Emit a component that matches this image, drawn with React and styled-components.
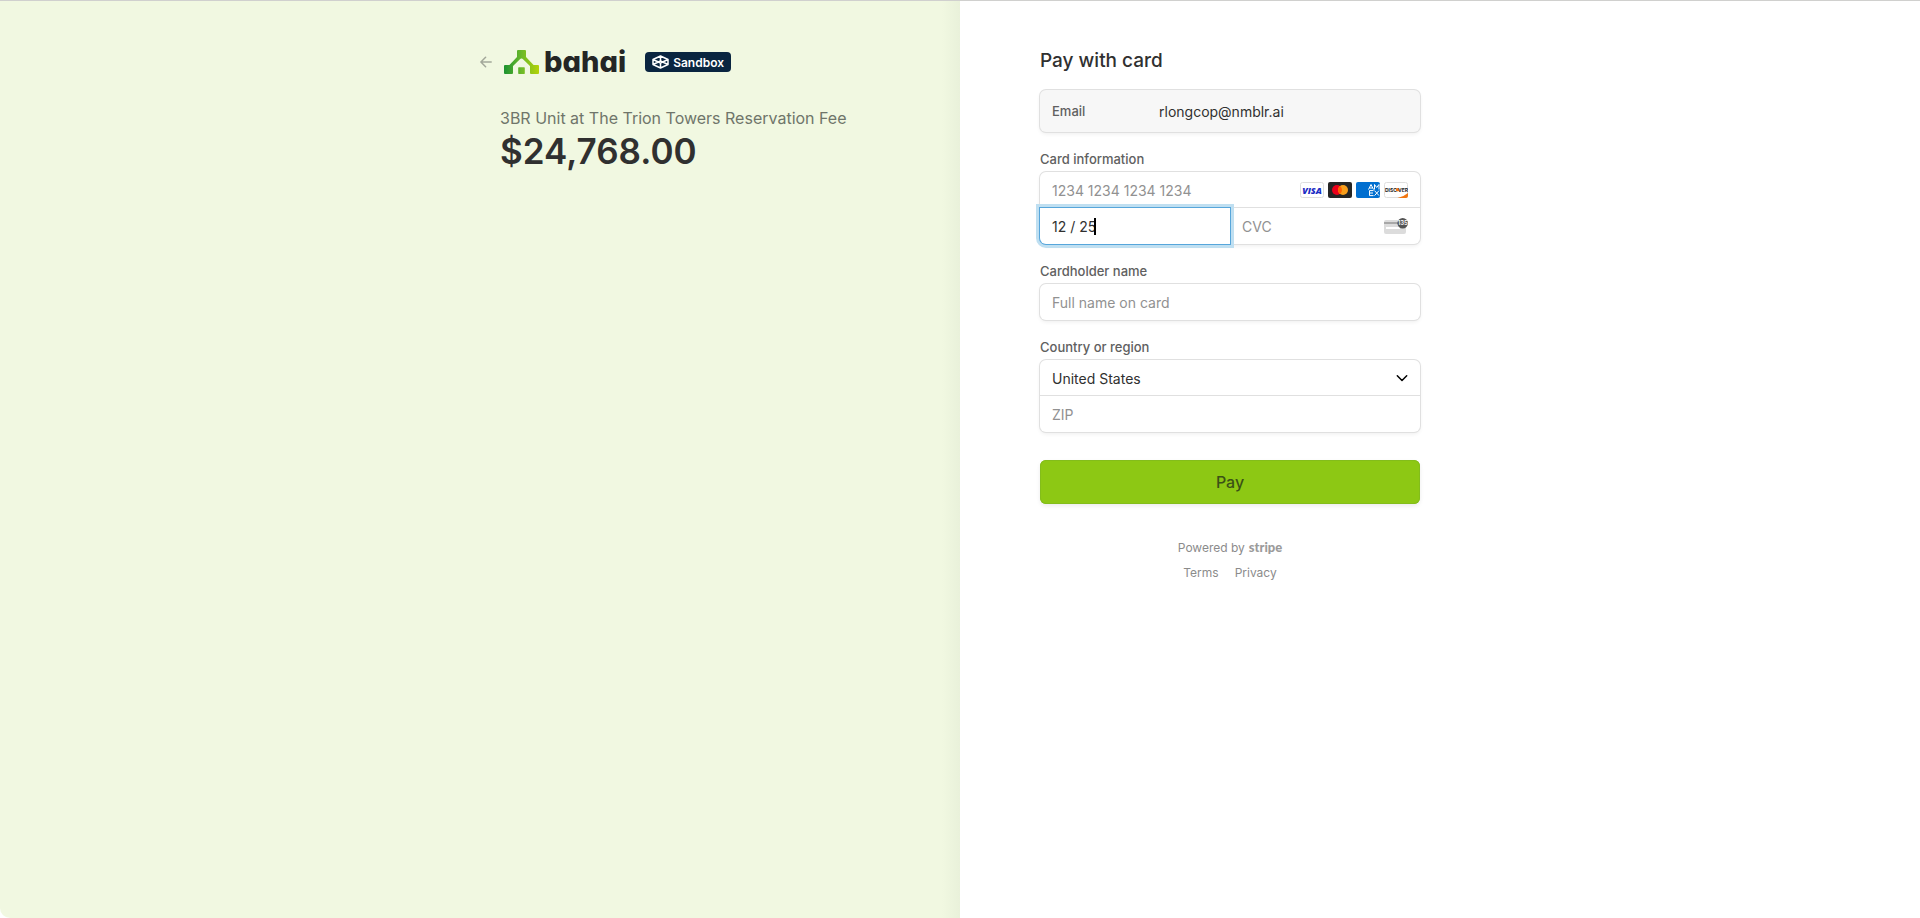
import React from "react";
import styled, { createGlobalStyle } from "styled-components";

const GlobalStyle = createGlobalStyle`
  *, *::before, *::after { box-sizing: border-box; }
  body {
    margin: 0;
    background: #fff;
    color: #303030;
    font-family: Inter, "Liberation Sans", sans-serif;
    font-size: 14px;
    -webkit-font-smoothing: antialiased;
  }
  input, select, button { font: inherit; color: inherit; margin: 0; }
`;

const Page = styled.div`
  display: grid;
  grid-template-columns: 1fr 1fr;
  min-height: 100vh;
  border-top: 1px solid #d0d0ce;
`;

const Summary = styled.section`
  display: flex;
  justify-content: flex-end;
  padding: 48px 80px 48px 20px;
  border-bottom-left-radius: 10px;
  background: linear-gradient(to left, #e9f1da 0, #f1f8e1 18px);
`;

const SummaryColumn = styled.div`
  width: 100%;
  max-width: 380px;
`;

const Payment = styled.main`
  padding: 48px 20px 48px 80px;
`;

const PaymentColumn = styled.form`
  width: 100%;
  max-width: 380px;
`;

const Header = styled.header`
  display: flex;
  align-items: center;
  height: 26px;
  margin-left: -20px;
`;

const BackLink = styled.a`
  display: flex;
  margin-right: 12px;
  color: #a3a89a;
`;

const Brand = styled.div`
  display: flex;
  align-items: center;
  gap: 5px;
`;

const Wordmark = styled.span`
  color: #242625;
  font-size: 29px;
  font-weight: 800;
  line-height: 24px;
  font-feature-settings: "cv11";
`;

const Badge = styled.span`
  display: flex;
  align-items: center;
  gap: 4px;
  height: 20px;
  margin-left: 19px;
  padding: 0 7px;
  border-radius: 4px;
  background: #0a2540;
  color: #fff;
  font-size: 12px;
  font-weight: 600;
`;

const ProductName = styled.h1`
  margin: 30px 0 0;
  color: #6f756a;
  font-size: 16px;
  font-weight: 400;
  line-height: 26px;
`;

const Price = styled.p`
  margin: 0;
  font-size: 35px;
  font-weight: 600;
  line-height: 41px;
`;

const Title = styled.h2`
  margin: 0 0 17px;
  font-size: 19px;
  font-weight: 500;
  line-height: 24px;
`;

const Panel = styled.div`
  border-radius: 6px;
  background: ${(p) => (p.$muted ? "#f7f7f7" : "#fff")};
  box-shadow: 0 0 0 1px #e0e0e0, 0 2px 4px rgba(0, 0, 0, 0.07);
`;

const EmailRow = styled(Panel)`
  display: flex;
  align-items: center;
  height: 42px;
  padding: 0 12px;
`;

const EmailLabel = styled.span`
  width: 107px;
  color: #606060;
  font-size: 13px;
  font-weight: 500;
`;

const Field = styled.fieldset`
  min-width: 0;
  margin: 18px 0 0;
  padding: 0;
  border: 0;
`;

const Label = styled.label`
  display: block;
  margin-bottom: 4px;
  color: #606060;
  font-size: 13px;
  font-weight: 500;
  line-height: 18px;
`;

const Split = styled.div`
  display: grid;
  grid-template-columns: repeat(2, minmax(0, 1fr));
`;

const Cell = styled.div`
  position: relative;
  display: flex;
  align-items: center;
  min-width: 0;
  height: 36px;
  padding-right: 12px;
  box-shadow: ${(p) => (p.$divided ? "inset 0 -1px 0 #e0e0e0" : "none")};
`;

const TextInput = styled.input`
  flex: 1;
  width: 100%;
  min-width: 0;
  height: 100%;
  padding: 0 12px;
  border: 0;
  outline: 0;
  background: transparent;
  &::placeholder { color: #919191; opacity: 1; }
`;

const ActiveCell = styled(Cell)`
  z-index: 1;
  border-radius: 0 0 0 6px;
  background: #fff;
  box-shadow: 0 0 0 1px #57a6db, 0 0 0 4px #bfdff1;
  ${TextInput} { caret-color: transparent; }
`;

const Caret = styled.span`
  position: absolute;
  left: 54px;
  width: 2px;
  height: 17px;
  background: #000;
`;

const CardBrands = styled.div`
  display: flex;
  gap: 4px;
`;

const Icon = styled.svg`
  display: block;
  flex: none;
`;

const CountrySelect = styled.select`
  width: 100%;
  height: 100%;
  padding: 0 12px;
  border: 0;
  outline: 0;
  background: transparent;
  appearance: none;
`;

const PayButton = styled.button`
  display: block;
  width: 100%;
  height: 44px;
  margin-top: 28px;
  border: 0;
  border-radius: 6px;
  background: #8dc814;
  box-shadow: inset 0 0 0 1px #83bd1b, 0 2px 4px rgba(0, 0, 0, 0.08);
  color: #3b5216;
  font-size: 16px;
  font-weight: 500;
`;

const Footer = styled.footer`
  display: flex;
  flex-direction: column;
  align-items: center;
  margin-top: 31px;
  color: #8b8b8b;
  font-size: 12px;
  line-height: 25px;
`;

const FooterLine = styled.div`
  display: flex;
  gap: ${(p) => p.$gap}px;
`;

const FooterLink = styled.a`
  color: inherit;
  text-decoration: none;
`;

const StripeMark = styled.span`
  color: #9b9b9b;
  font-family: Lato, sans-serif;
  font-size: 13px;
  font-weight: 900;
`;

const Chevron = styled.svg`
  position: absolute;
  right: 12px;
  pointer-events: none;
`;

const ArrowIcon = () => (
  <Icon width="12" height="12" viewBox="0 0 12 12" fill="none" stroke="currentColor" strokeWidth="1.500" strokeLinecap="round" strokeLinejoin="round">
    <path d="M11.200 6H1M5.600 1.200.900 6l4.700 4.800" />
  </Icon>
);

const HouseLogo = () => (
  <Icon width="35" height="24" viewBox="0 0 35 24">
    <defs>
      <linearGradient id="leaf" gradientUnits="userSpaceOnUse" x1="0" y1="0" x2="35" y2="0">
        <stop offset="0" stopColor="#1c9230" />
        <stop offset="0.5" stopColor="#6cb92a" />
        <stop offset="1" stopColor="#b4d306" />
      </linearGradient>
    </defs>
    <g fill="url(#leaf)">
      <rect x="0" y="15" width="9" height="9" rx="1" />
      <rect x="13" y="0" width="9" height="8.500" rx="1" />
      <rect x="26" y="15" width="9" height="9" rx="1" />
      <rect x="14.200" y="17.300" width="6.600" height="6.600" rx=".6" />
      <path d="M13.500 6.500 17 8.200 7.500 17.500 4.500 16Z" />
      <path d="M21.500 6.500 18 8.200l9.500 9.300 3-1.500Z" />
    </g>
  </Icon>
);

const BoxIcon = () => (
  <Icon width="17" height="14" viewBox="0 0 17 14" fill="none" stroke="#fff" strokeWidth="1.500" strokeLinejoin="round">
    <path d="M8.500 1 16 4.500v5L8.500 13 1 9.500v-5ZM1 4.500 8.500 8 16 4.500M8.500 8v5M1 9.500l7.500-3.500L16 9.500M8.500 1v5" />
  </Icon>
);

const Visa = () => (
  <Icon width="24" height="16" role="img" aria-label="Visa">
    <rect x=".5" y=".5" width="23" height="15" rx="2" fill="#fff" stroke="#dedede" />
    <text x="12" y="11.500" textAnchor="middle" fontFamily="Open Sans" fontSize="9" fontWeight="800" fontStyle="italic" fill="#1a2bc4">VISA</text>
  </Icon>
);

const Mastercard = () => (
  <Icon width="24" height="16" role="img" aria-label="Mastercard">
    <rect width="24" height="16" rx="2" fill="#252525" />
    <circle cx="9" cy="8" r="5" fill="#eb001b" />
    <circle cx="15" cy="8" r="5" fill="#f79e1b" />
    <path d="M12 4a5 5 0 0 1 0 8a5 5 0 0 1 0-8Z" fill="#ff5f00" />
  </Icon>
);

const Amex = () => (
  <Icon width="24" height="16" role="img" aria-label="American Express">
    <rect width="24" height="16" rx="2" fill="#016fd0" />
    <g fill="none" stroke="#fff" strokeWidth="1">
      <path d="M12.500 7.500 15 2.500l2.500 5M13.500 6h3M18.500 7.500v-5l2.200 3 2.300-3v5M17.500 8.600h-4v5h4M13.500 11h3.500M18.500 8.600l4.500 5M23 8.600l-4.500 5" />
    </g>
  </Icon>
);

const Discover = () => (
  <Icon width="24" height="16" role="img" aria-label="Discover">
    <rect x=".5" y=".5" width="23" height="15" rx="2" fill="#fff" stroke="#dedede" />
    <path d="M24 11v3a2 2 0 0 1-2 2h-8.500Q20 14.500 24 11Z" fill="#f27712" />
    <text x="1" y="9.500" fontSize="5" fontWeight="700" fill="#222">DISC</text>
    <circle cx="13.500" cy="7.700" r="1.800" fill="#f27712" />
    <text x="14" y="9.500" fontSize="5" fontWeight="700" fill="#222">VER</text>
  </Icon>
);

const CvcIcon = () => (
  <Icon width="24" height="16" viewBox="0 0 24 16" role="img" aria-label="Security code">
    <rect y="2" width="22" height="14" rx="2" fill="#dcdcdc" />
    <path d="M0 4h22v2H0Z" fill="#a8a8a8" />
    <rect x="2" y="9" width="14" height="2" fill="#fff" />
    <circle cx="18.700" cy="5.300" r="5.300" fill="#545454" />
    <text x="18.700" y="7.400" textAnchor="middle" fontSize="6" fontWeight="600" fill="#fff">135</text>
  </Icon>
);

export default function App() {
  return (
    <>
      <GlobalStyle />
      <Page>
        <Summary>
          <SummaryColumn>
            <Header>
              <BackLink href="#" aria-label="Back"><ArrowIcon /></BackLink>
              <Brand>
                <HouseLogo />
                <Wordmark>bahai</Wordmark>
              </Brand>
              <Badge><BoxIcon />Sandbox</Badge>
            </Header>
            <ProductName>3BR Unit at The Trion Towers Reservation Fee</ProductName>
            <Price>$24,768.00</Price>
          </SummaryColumn>
        </Summary>
        <Payment>
          <PaymentColumn onSubmit={(e) => e.preventDefault()}>
            <Title>Pay with card</Title>
            <EmailRow $muted>
              <EmailLabel>Email</EmailLabel>
              <span>rlongcop@nmblr.ai</span>
            </EmailRow>
            <Field>
              <Label htmlFor="number">Card information</Label>
              <Panel>
                <Cell $divided>
                  <TextInput id="number" placeholder="1234 1234 1234 1234" />
                  <CardBrands><Visa /><Mastercard /><Amex /><Discover /></CardBrands>
                </Cell>
                <Split>
                  <ActiveCell>
                    <TextInput aria-label="Expiration" defaultValue="12 / 25" />
                    <Caret />
                  </ActiveCell>
                  <Cell>
                    <TextInput aria-label="CVC" placeholder="CVC" />
                    <CvcIcon />
                  </Cell>
                </Split>
              </Panel>
            </Field>
            <Field>
              <Label htmlFor="name">Cardholder name</Label>
              <Panel>
                <Cell><TextInput id="name" placeholder="Full name on card" /></Cell>
              </Panel>
            </Field>
            <Field>
              <Label htmlFor="country">Country or region</Label>
              <Panel>
                <Cell $divided>
                  <CountrySelect id="country" defaultValue="US">
                    <option value="US">United States</option>
                  </CountrySelect>
                  <Chevron width="12" height="12" viewBox="0 0 12 12" fill="none" stroke="#000" strokeWidth="1.500" strokeLinecap="round" strokeLinejoin="round">
                    <path d="M1.300 3.800 6 8.500l4.700-4.700" />
                  </Chevron>
                </Cell>
                <Cell><TextInput aria-label="ZIP" placeholder="ZIP" /></Cell>
              </Panel>
            </Field>
            <PayButton type="submit">Pay</PayButton>
            <Footer>
              <FooterLine $gap={4}>Powered by <StripeMark>stripe</StripeMark></FooterLine>
              <FooterLine $gap={16}>
                <FooterLink href="#">Terms</FooterLink>
                <FooterLink href="#">Privacy</FooterLink>
              </FooterLine>
            </Footer>
          </PaymentColumn>
        </Payment>
      </Page>
    </>
  );
}
